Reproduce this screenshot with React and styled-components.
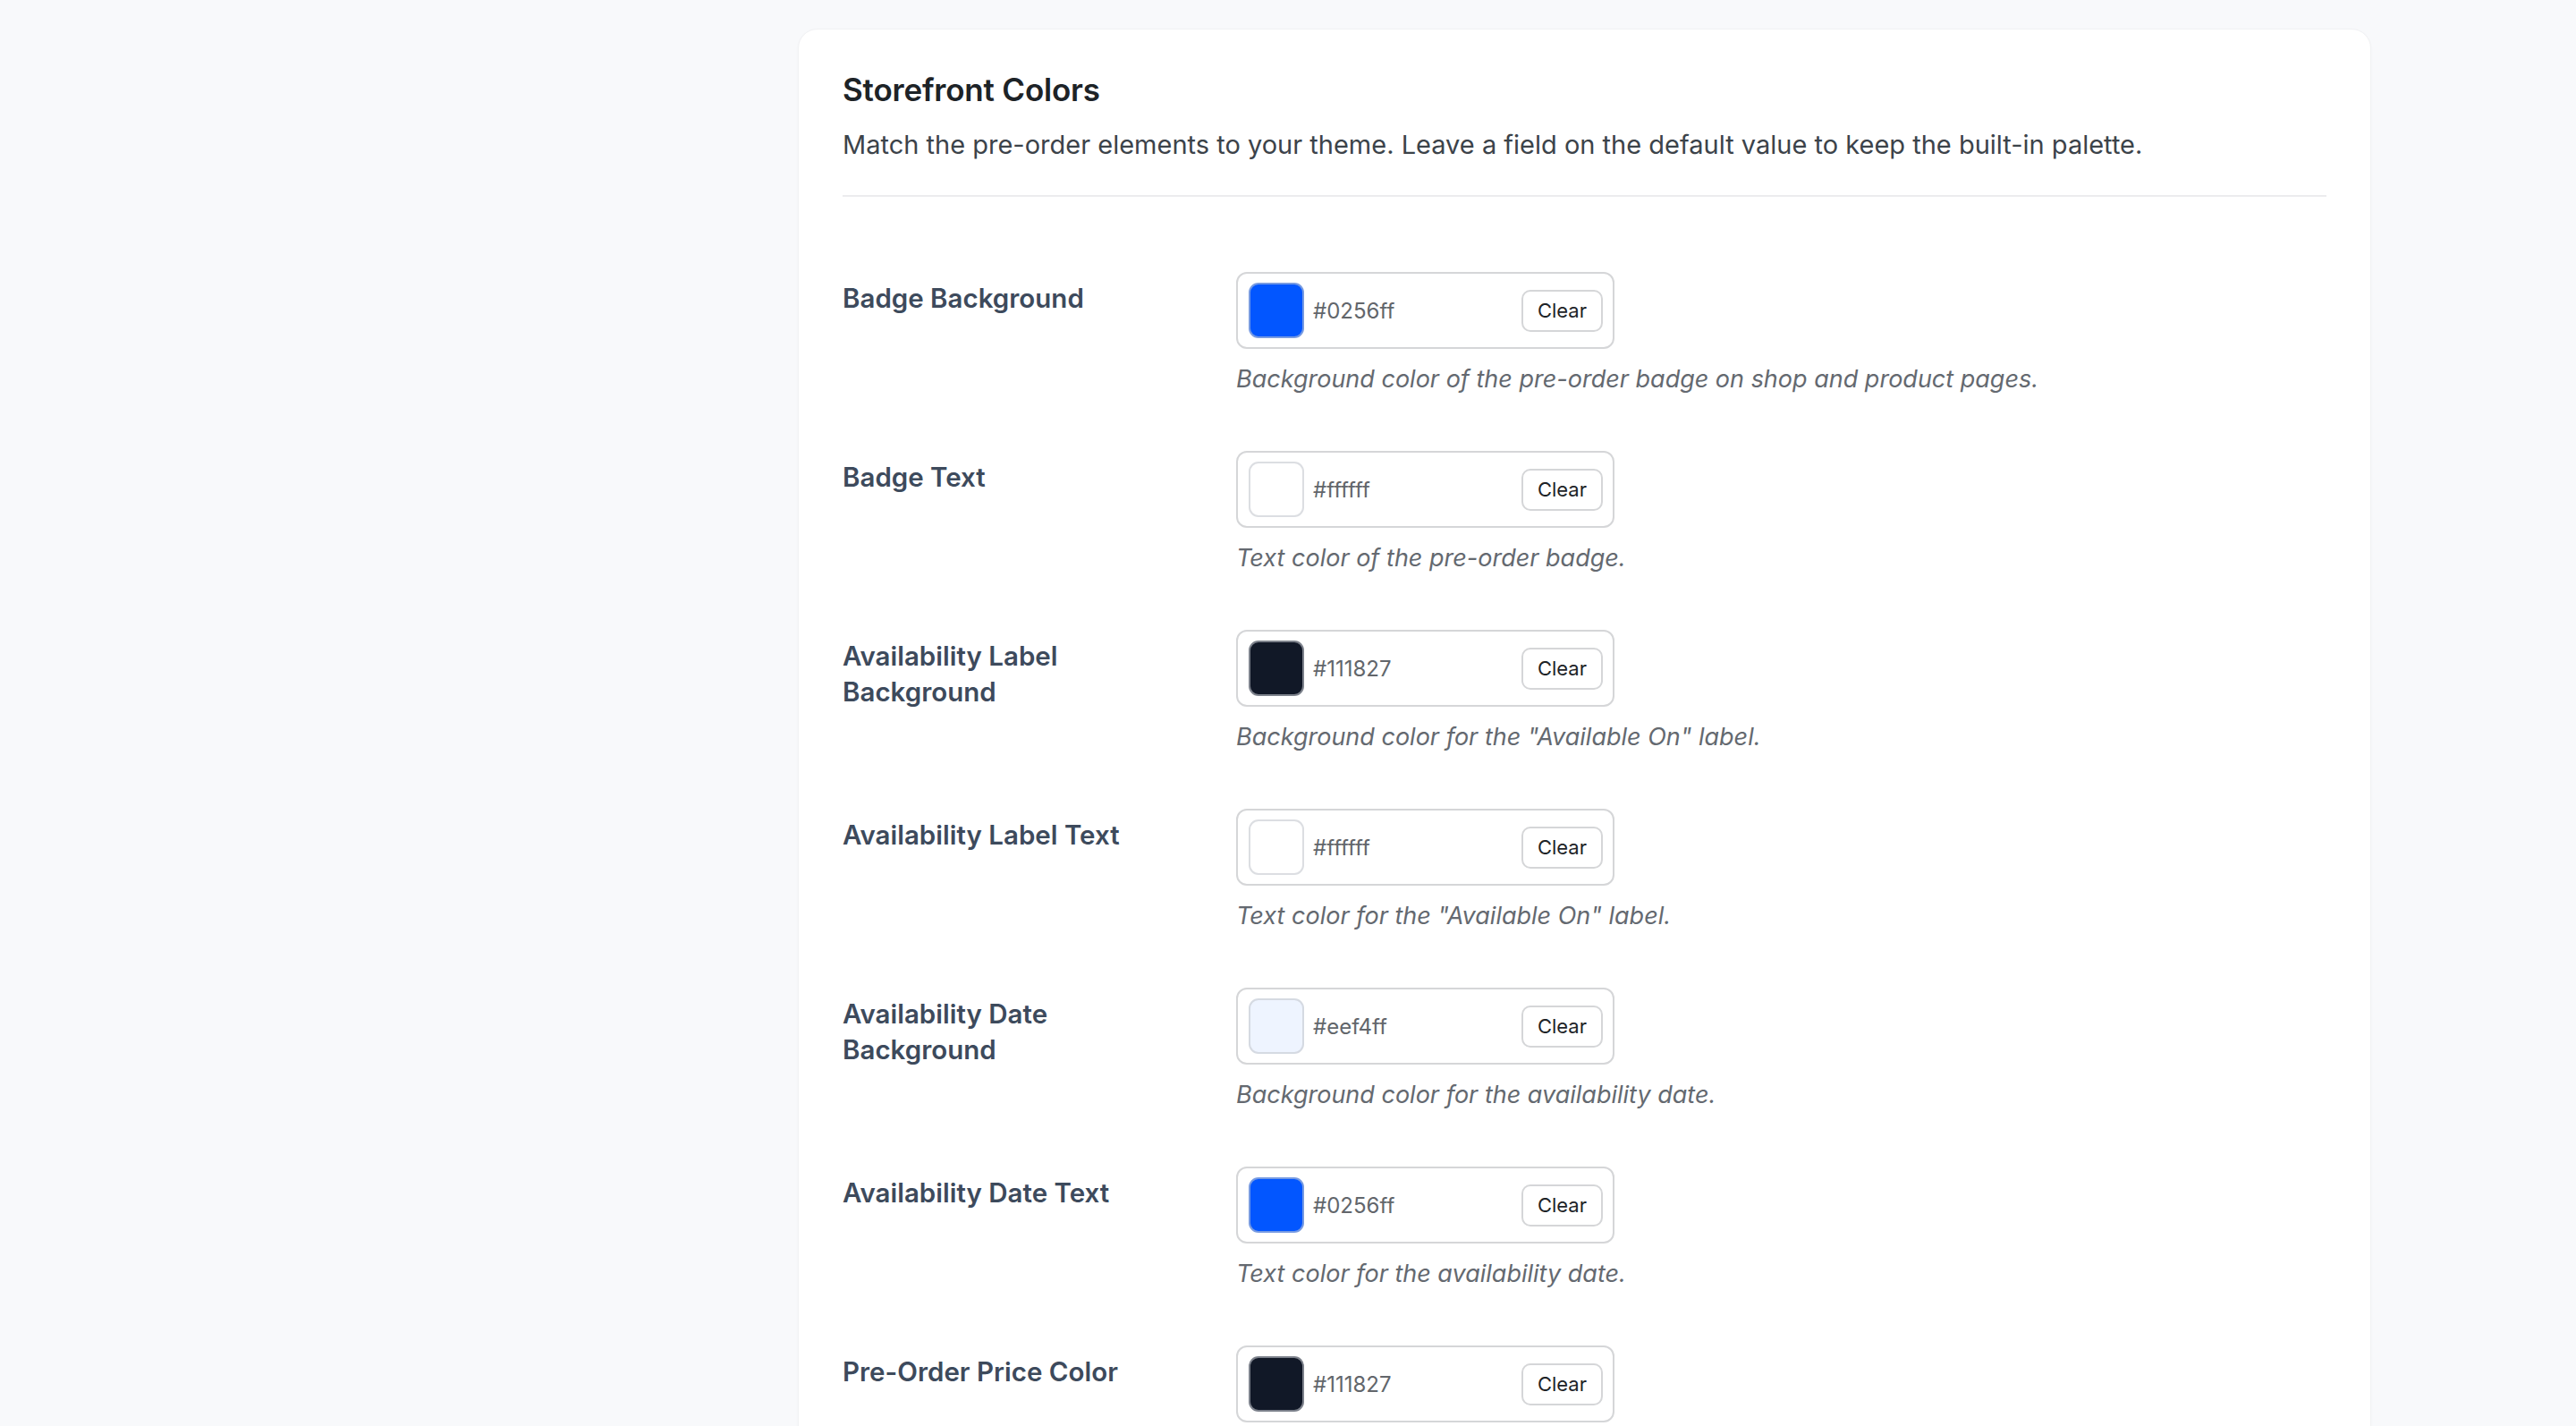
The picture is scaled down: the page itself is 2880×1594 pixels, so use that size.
import React from 'react'
import styled, { createGlobalStyle } from 'styled-components'

const GlobalStyle = createGlobalStyle`
  html, body {
    margin: 0;
    padding: 0;
    background: #f8f9fb;
    font-family: Inter, "Noto Sans", "Liberation Sans", sans-serif;
    -webkit-font-smoothing: antialiased;
  }
  * { box-sizing: border-box; }
`

const Page = styled.div`
  display: flex;
  padding: 32px 229px 0 892px;
  min-height: 1594px;
`

const Card = styled.section`
  flex: 1;
  background: #fff;
  border: 1px solid #f1f2f4;
  border-radius: 22px;
  box-shadow: 0 1px 3px rgba(16, 24, 40, 0.03);
  padding: 43px 49px 40px;
`

const Title = styled.h2`
  margin: 0;
  font-size: 35px;
  line-height: 48px;
  font-weight: 600;
  color: #1d2327;
  letter-spacing: -0.2px;
`

const Intro = styled.p`
  margin: 18px 0 0;
  font-size: 29px;
  line-height: 40px;
  color: #3c434a;
`

const Divider = styled.hr`
  margin: 36px 0 54px;
  border: 0;
  height: 2px;
  background: #ececee;
`

const Row = styled.div`
  display: grid;
  grid-template-columns: 440px 1fr;
  padding: 30px 0;
`

const Label = styled.label`
  max-width: 380px;
  padding-top: 9px;
  font-size: 29.5px;
  line-height: 40px;
  font-weight: 600;
  color: #3d4a5c;
`

const Field = styled.div`
  display: flex;
  flex-direction: column;
  align-items: flex-start;
`

const Picker = styled.div`
  display: flex;
  align-items: center;
  width: 423px;
  height: 86px;
  padding: 0 11px 0 12px;
  border: 2px solid #d5d6d8;
  border-radius: 12px;
  background: #fff;
`

const Swatch = styled.span`
  width: 62px;
  height: 62px;
  flex: none;
  border-radius: 11px;
  border: 2px solid rgba(196, 200, 206, 0.6);
  background: ${(p) => p.$color};
`

const Hex = styled.span`
  flex: 1;
  margin-left: 10px;
  font-size: 24px;
  color: #62666b;
`

const ClearButton = styled.button`
  height: 47px;
  padding: 0 16px;
  border: 2px solid #d5d6d8;
  border-radius: 10px;
  background: #fff;
  font-family: inherit;
  font-size: 22px;
  font-weight: 400;
  color: #1d2327;
  cursor: pointer;
`

const Help = styled.p`
  margin: 14px 0 0;
  font-size: 27px;
  line-height: 40px;
  font-style: italic;
  color: #646970;
`

const fields = [
  { label: 'Badge Background', value: '#0256ff', help: 'Background color of the pre-order badge on shop and product pages.' },
  { label: 'Badge Text', value: '#ffffff', help: 'Text color of the pre-order badge.' },
  { label: 'Availability Label Background', value: '#111827', help: 'Background color for the "Available On" label.' },
  { label: 'Availability Label Text', value: '#ffffff', help: 'Text color for the "Available On" label.' },
  { label: 'Availability Date Background', value: '#eef4ff', help: 'Background color for the availability date.' },
  { label: 'Availability Date Text', value: '#0256ff', help: 'Text color for the availability date.' },
  { label: 'Pre-Order Price Color', value: '#111827' },
]

const ColorRow = ({ label, value, help }) => (
  <Row>
    <Label>{label}</Label>
    <Field>
      <Picker>
        <Swatch $color={value} />
        <Hex>{value}</Hex>
        <ClearButton type="button">Clear</ClearButton>
      </Picker>
      {help && <Help>{help}</Help>}
    </Field>
  </Row>
)

const App = () => {
  return (
    <>
      <GlobalStyle />
      <Page>
        <Card>
          <Title>Storefront Colors</Title>
          <Intro>
            Match the pre-order elements to your theme. Leave a field on the default value to keep the built-in palette.
          </Intro>
          <Divider />
          {fields.map((f) => (
            <ColorRow key={f.label} {...f} />
          ))}
        </Card>
      </Page>
    </>
  )
}

export default App
